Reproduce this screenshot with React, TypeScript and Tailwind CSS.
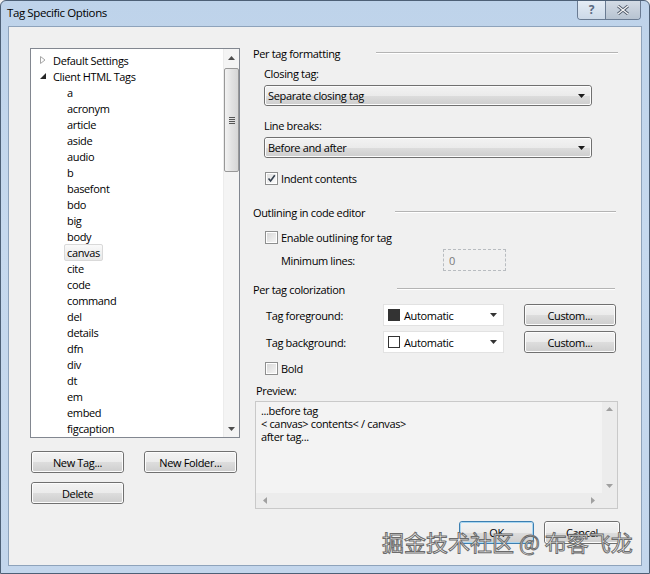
import React from "react";

const TAGS = [
  "a","acronym","article","aside","audio","b","basefont","bdo","big","body","canvas","cite","code","command","del","details","dfn","div","dt","em","embed","figcaption",
];

function Tri({ dir, cls = "fill-[#4d4d4d]" }: { dir: "up" | "down" | "left" | "right"; cls?: string }) {
  const pts =
    dir === "up" ? "0,4 3.5,0 7,4" : dir === "down" ? "0,0 7,0 3.5,4" : dir === "left" ? "4,0 4,7 0,3.5" : "0,0 4,3.5 0,7";
  const w = dir === "up" || dir === "down" ? 7 : 4;
  const h = dir === "up" || dir === "down" ? 4 : 7;
  return (
    <svg width={w} height={h} viewBox={`0 0 ${w} ${h}`} className={cls}>
      <polygon points={pts} />
    </svg>
  );
}

function Win7Button({ w, h = 22, label, def = false }: { w: number; h?: number; label: string; def?: boolean }) {
  return (
    <div
      style={{ width: w, height: h }}
      className={`rounded-[3px] border ${def ? "border-[#3c7fb1]" : "border-[#707070]"}`}
    >
      <div
        className={`w-full h-full rounded-[2px] flex items-center justify-center ${
          def ? "border border-[#a9d6f1]" : "border border-[#fcfcfc]"
        } bg-[linear-gradient(to_bottom,#f2f2f2_0%,#ebebeb_50%,#dddddd_51%,#cfcfcf_100%)]`}
      >
        <span className="leading-none">{label}</span>
      </div>
    </div>
  );
}

function Combo({ w, label }: { w: number; label: string }) {
  return (
    <div style={{ width: w }} className="h-[21px] rounded-[3px] border border-[#707070]">
      <div className="w-full h-full rounded-[2px] border border-[#fcfcfc] flex items-center pl-[2px] pr-[5px] bg-[linear-gradient(to_bottom,#f2f2f2_0%,#ebebeb_50%,#dddddd_51%,#cfcfcf_100%)]">
        <span className="flex-1 leading-none">{label}</span>
        <Tri dir="down" cls="fill-[#1a1a1a]" />
      </div>
    </div>
  );
}

function ColorCombo({ dark, label }: { dark: boolean; label: string }) {
  return (
    <div className="w-[121px] h-[22px] border border-[#e2e2e2] bg-white flex items-center pl-[4px] pr-[6px]">
      <div className={`w-[12px] h-[12px] border ${dark ? "bg-[#333333] border-[#333333]" : "bg-white border-[#333333]"}`} />
      <span className="ml-[4px] flex-1 leading-none">{label}</span>
      <Tri dir="down" cls="fill-[#333333]" />
    </div>
  );
}

function CheckBox({ checked, label, disabled = false }: { checked: boolean; label: string; disabled?: boolean }) {
  return (
    <div className="flex items-center">
      <div className="w-[13px] h-[13px] border border-[#8e8f8f] bg-white p-px">
        <div
          className={`w-full h-full flex items-center justify-center ${
            disabled ? "bg-[linear-gradient(135deg,#d8d8d8,#f4f4f4)]" : "bg-[linear-gradient(135deg,#e0e0e0,#fbfbfb)]"
          }`}
        >
          {checked && (
            <svg width="9" height="9" viewBox="0 0 9 9">
              <path d="M1.5 4.5 L3.6 7 L7.8 1.2" fill="none" stroke="#34404f" strokeWidth="1.6" />
            </svg>
          )}
        </div>
      </div>
      <span className="ml-[3px] leading-none">{label}</span>
    </div>
  );
}

function Header({ label, textW, lineW }: { label: string; textW: number; lineW: number }) {
  return (
    <div className="h-[16px] flex items-center">
      <div style={{ width: textW }} className="pl-px leading-none">
        {label}
      </div>
      <div style={{ width: lineW }} className="h-[2px] border-t border-[#b4b4b4] border-b border-b-white" />
    </div>
  );
}

export default function App() {
  return (
    <div className="w-[650px] h-[574px] overflow-hidden bg-[#f0f0f0]">
      <div className="relative w-[650px] h-[574px] flex flex-col border border-[#4d6076] rounded-t-[6px] bg-[linear-gradient(to_bottom,#bed3ea,#c6d9ee_40%,#c3d6ec)] font-['Open_Sans',sans-serif] text-[11px] tracking-[-0.35px] text-black">
        {/* Title bar */}
        <div className="h-[25px] flex items-start shrink-0">
          <div className="pl-[6px] pt-[6px] text-[11.5px] tracking-[-0.4px] leading-none">Tag Specific Options</div>
          <div className="ml-auto mr-[8px] flex h-[19px] border border-t-0 border-[#6a7b92] rounded-b-[4px] overflow-hidden">
            <div className="w-[28px] flex items-center justify-center bg-[linear-gradient(to_bottom,#e4ecf5,#ccd9e8)] border-r border-[#6a7b92] text-[#5a6a80] font-bold text-[12px] leading-none">
              ?
            </div>
            <div className="w-[34px] flex items-center justify-center bg-[linear-gradient(to_bottom,#d3dbe5,#b7c3d1)]">
              <svg width="12" height="10" viewBox="0 0 12 10">
                <path d="M1 1 L11 9 M11 1 L1 9" stroke="#4a5566" strokeWidth="3" />
                <path d="M1 1 L11 9 M11 1 L1 9" stroke="#f4f4f4" strokeWidth="1.4" />
              </svg>
            </div>
          </div>
        </div>

        {/* Client area */}
        <div className="mx-[7px] mb-[7px] flex-1 border border-[#8ea3bb] bg-[#f0f0f0] flex">
          {/* Left column */}
          <div className="ml-[21px] mt-[21px] w-[210px] flex flex-col">
            <div className="h-[390px] border border-[#828790] bg-white flex">
              <div className="flex-1 pt-[3px]">
                <div className="h-[16px] flex items-center pl-[9px]">
                  <svg width="6" height="8" viewBox="0 0 6 8">
                    <polygon points="0.5,0.5 5,4 0.5,7.5" fill="none" stroke="#a6a6a6" />
                  </svg>
                  <span className="ml-[7px] leading-none">Default Settings</span>
                </div>
                <div className="h-[16px] flex items-center pl-[9px]">
                  <svg width="6" height="6" viewBox="0 0 6 6">
                    <polygon points="6,0 6,6 0,6" fill="#262626" />
                  </svg>
                  <span className="ml-[7px] leading-none">Client HTML Tags</span>
                </div>
                {TAGS.map((t) => (
                  <div key={t} className="h-[16px] flex items-center pl-[36px]">
                    {t === "canvas" ? (
                      <span className="-ml-[3px] h-[17px] px-[2px] flex items-center border border-[#d9d9d9] rounded-[2px] bg-[linear-gradient(to_bottom,#fafafa,#e8e8e8)] leading-none">
                        {t}
                      </span>
                    ) : (
                      <span className="leading-none">{t}</span>
                    )}
                  </div>
                ))}
              </div>
              {/* scrollbar */}
              <div className="w-[16px] bg-[#f4f4f4] border-l border-[#ececec] flex flex-col items-center">
                <div className="h-[17px] flex items-center justify-center">
                  <Tri dir="up" />
                </div>
                <div className="mt-[2px] w-[15px] h-[104px] rounded-[2px] border border-[#989898] bg-[linear-gradient(to_right,#f2f2f2,#e2e2e2_50%,#d6d6d6)] flex items-center justify-center">
                  <div className="flex flex-col gap-[1px]">
                    <div className="w-[6px] h-px bg-[#555]" />
                    <div className="w-[6px] h-px bg-[#555]" />
                    <div className="w-[6px] h-px bg-[#555]" />
                    <div className="w-[6px] h-px bg-[#555]" />
                  </div>
                </div>
                <div className="flex-1" />
                <div className="h-[17px] flex items-center justify-center">
                  <Tri dir="down" />
                </div>
              </div>
            </div>
            <div className="mt-[13px] ml-px flex gap-[20px]">
              <Win7Button w={93} label="New Tag..." />
              <Win7Button w={93} label="New Folder..." />
            </div>
            <div className="mt-[9px] ml-px">
              <Win7Button w={93} label="Delete" />
            </div>
          </div>

          {/* Right column */}
          <div className="ml-[12px] mt-[18px] w-[368px] flex flex-col">
            <Header label="Per tag formatting" textW={124} lineW={242} />
            <div className="mt-[4px] h-[16px] flex items-center pl-[12px] leading-none">Closing tag:</div>
            <div className="mt-[4px] ml-[12px]">
              <Combo w={328} label="Separate closing tag" />
            </div>
            <div className="mt-[11px] h-[16px] flex items-center pl-[12px] leading-none">Line breaks:</div>
            <div className="mt-[4px] ml-[12px]">
              <Combo w={328} label="Before and after" />
            </div>
            <div className="mt-[12px] h-[16px] ml-[13px] flex items-center">
              <CheckBox checked label="Indent contents" />
            </div>

            <div className="mt-[18px]">
              <Header label="Outlining in code editor" textW={143} lineW={221} />
            </div>
            <div className="mt-[9px] h-[16px] ml-[13px] flex items-center">
              <CheckBox checked={false} disabled label="Enable outlining for tag" />
            </div>
            <div className="mt-[4px] h-[22px] flex items-center">
              <span className="ml-[29px] w-[162px] leading-none">Minimum lines:</span>
              <div className="w-[63px] h-[22px] border border-dashed border-[#b8bcc0] bg-[#f0f0f0] flex items-center pl-[5px] text-[#7a7a7a] leading-none">
                0
              </div>
            </div>

            <div className="mt-[10px]">
              <Header label="Per tag colorization" textW={145} lineW={218} />
            </div>
            <div className="mt-[7px] h-[22px] flex items-center">
              <span className="ml-[14px] w-[117px] leading-none">Tag foreground:</span>
              <ColorCombo dark label="Automatic" />
              <div className="ml-[20px]">
                <Win7Button w={92} label="Custom..." />
              </div>
            </div>
            <div className="mt-[5px] h-[22px] flex items-center">
              <span className="ml-[14px] w-[117px] leading-none">Tag background:</span>
              <ColorCombo dark={false} label="Automatic" />
              <div className="ml-[20px]">
                <Win7Button w={92} label="Custom..." />
              </div>
            </div>
            <div className="mt-[7px] h-[16px] ml-[13px] flex items-center">
              <CheckBox checked={false} disabled label="Bold" />
            </div>
            <div className="mt-[6px] h-[16px] flex items-center pl-[4px] leading-none">Preview:</div>
            <div className="mt-[3px] ml-[3px] w-[363px] h-[108px] border border-[#c9c9c9] bg-[#f3f3f3] flex flex-col">
              <div className="flex-1 flex">
                <div className="flex-1 pl-[5px] pt-[2px]">
                  <div className="h-[13px] flex items-center leading-none">...before tag</div>
                  <div className="h-[13px] flex items-center leading-none">&lt; canvas&gt; contents&lt; / canvas&gt;</div>
                  <div className="h-[13px] flex items-center leading-none">after tag...</div>
                </div>
                <div className="w-[15px] bg-[#ececec] flex flex-col items-center justify-between py-[5px]">
                  <Tri dir="up" cls="fill-[#a0a0a0]" />
                  <Tri dir="down" cls="fill-[#a0a0a0]" />
                </div>
              </div>
              <div className="h-[15px] bg-[#ececec] flex items-center justify-between pl-[7px] pr-[22px]">
                <Tri dir="left" cls="fill-[#a0a0a0]" />
                <Tri dir="right" cls="fill-[#a0a0a0]" />
              </div>
            </div>
            <div className="mt-[12px] flex justify-end gap-[10px]">
              <Win7Button w={75} h={23} label="OK" def />
              <Win7Button w={76} h={23} label="Cancel" />
            </div>
          </div>
        </div>

        {/* watermark */}
        <div className="absolute left-[381px] top-[529px] text-[22px] leading-none tracking-normal text-white font-['Noto_Sans_CJK_SC',sans-serif] [-webkit-text-stroke:1px_#6b6b6b] whitespace-nowrap">
          掘金技术社区 @ 布客飞龙
        </div>
      </div>
    </div>
  );
}
